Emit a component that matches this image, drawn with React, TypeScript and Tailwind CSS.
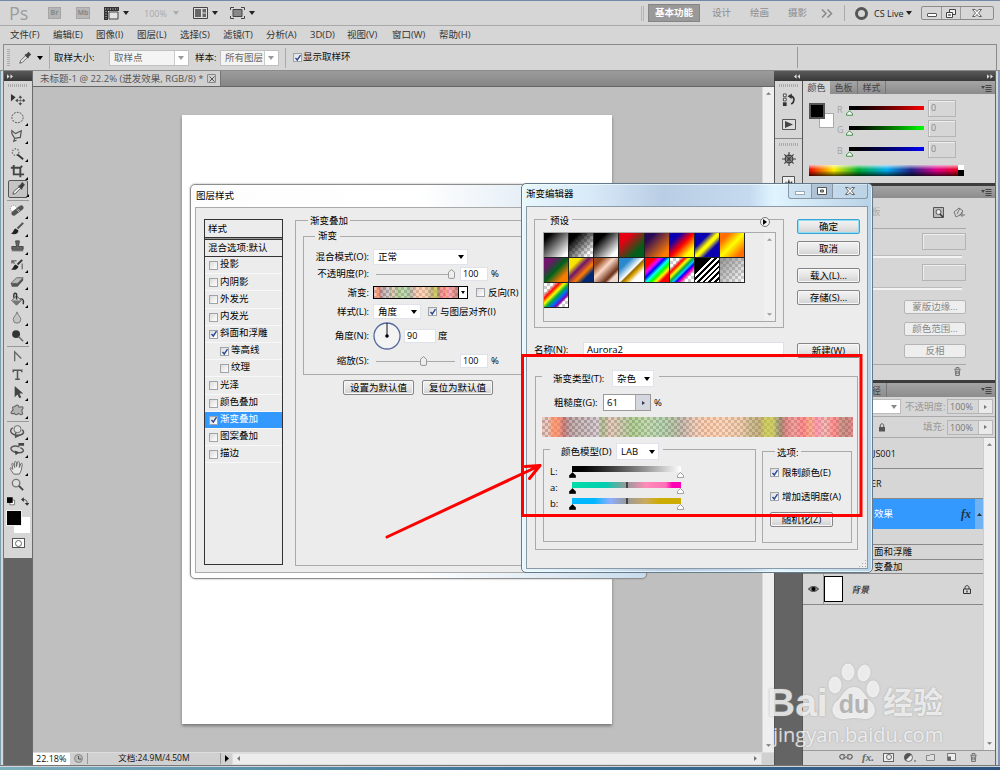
import type { ReactNode } from "react"

function Caret({ className = "", color = "text-[#222]" }: { className?: string; color?: string }) {
  return (
    <svg viewBox="0 0 6 4" className={`w-[6px] h-[4px] shrink-0 ${color} ${className}`}>
      <path d="M0 0h6L3 4z" fill="currentColor" />
    </svg>
  )
}

function Check({ on, className = "" }: { on?: boolean; className?: string }) {
  return (
    <span
      className={`w-[9px] h-[9px] shrink-0 border border-[#a0a3a8] bg-gradient-to-br from-[#dcdcdc] to-white flex items-center justify-center ${className}`}
    >
      {on && (
        <svg viewBox="0 0 8 8" className="w-[8px] h-[8px] shrink-0">
          <path d="M1.5 4l1.8 2L6.5 1.2" fill="none" stroke="#2b4a94" strokeWidth="1.4" />
        </svg>
      )}
    </span>
  )
}

function Button({ children, className = "", primary }: { children: ReactNode; className?: string; primary?: boolean }) {
  return (
    <div
      className={`h-[15px] shrink-0 rounded-[2px] border flex items-center justify-center bg-gradient-to-b from-[#f3f3f3] via-[#e6e6e6] to-[#d0d0d0] ${
        primary ? "border-[#3ba6d6] shadow-[inset_0_0_0_1px_#8fdcf5]" : "border-[#858585] shadow-[inset_0_0_0_1px_#f8f8f8]"
      } ${className}`}
    >
      {children}
    </div>
  )
}

function Select({ children, className = "" }: { children: ReactNode; className?: string }) {
  return (
    <div className={`bg-white border border-[#e0e3ea] flex items-center justify-between pl-1 pr-[3px] shrink-0 ${className}`}>
      <span>{children}</span>
      <Caret color="text-black" />
    </div>
  )
}

function PanelMenu() {
  return (
    <svg viewBox="0 0 11 8" className="w-[11px] h-[8px] text-[#444]">
      <path d="M0 2h4L2 5zM4.500 1h6v1h-6zM4.500 3h6v1h-6zM4.500 5h6v1h-6zM4.500 7h6v1h-6z" fill="currentColor" />
    </svg>
  )
}

function Grip() {
  return (
    <div className="h-[3px] mx-1 bg-[repeating-linear-gradient(90deg,#aaa_0_1px,#d6d6d6_1px_2px)]" />
  )
}

const menus = [
  { label: "文件(F)", w: "w-[43px]" },
  { label: "编辑(E)", w: "w-[43px]" },
  { label: "图像(I)", w: "w-[41px]" },
  { label: "图层(L)", w: "w-[43px]" },
  { label: "选择(S)", w: "w-[43px]" },
  { label: "滤镜(T)", w: "w-[43px]" },
  { label: "分析(A)", w: "w-[44px]" },
  { label: "3D(D)", w: "w-[37px]" },
  { label: "视图(V)", w: "w-[45px]" },
  { label: "窗口(W)", w: "w-[47px]" },
  { label: "帮助(H)", w: "w-[43px]" },
]

function TitleBar() {
  return (
    <div className="h-[25px] shrink-0 flex items-center pl-[9px] pr-[6px] border-b border-[#a9a9a9] text-[#8c8c8c]">
      <span className="w-[39px] text-[18px] leading-none text-[#9c9c9c]">Ps</span>
      <span className="w-[13px] h-[12px] bg-[#b4b4b4] border border-[#a6a6a6] text-[7px] leading-[10px] text-center font-bold text-[#888]">Br</span>
      <span className="w-[14px] h-[12px] ml-[15px] bg-[#b8b8b8] border border-[#a6a6a6] text-[7px] leading-[10px] text-center font-bold text-[#888]">Mb</span>
      <svg viewBox="0 0 15 13" className="w-[15px] h-[13px] ml-[14px]">
        <path d="M0 0h15v4H4v9H0z" fill="#333" />
        <path d="M5 5h9v7H5z" fill="#e4e4e4" stroke="#444" />
        <path d="M1 2h13M2 4v8" stroke="#ddd" strokeDasharray="1 1.500" />
      </svg>
      <Caret className="ml-[4px]" />
      <span className="ml-[15px] w-[29px] text-[9px] text-[#aaa]">100%</span>
      <Caret color="text-[#aaa]" />
      <svg viewBox="0 0 15 12" className="w-[15px] h-[12px] ml-[14px]">
        <path d="M.5.500h14v11H.500z" fill="#ddd" stroke="#444" />
        <path d="M2 2h6v8H2zM9.500 2H13v3.500H9.500zM9.500 6.500H13V10H9.500z" fill="#666" />
      </svg>
      <Caret className="ml-[4px]" />
      <svg viewBox="0 0 15 12" className="w-[15px] h-[12px] ml-[12px]">
        <path d="M3 2.500h9v7H3z" fill="#888" stroke="#444" />
        <path d="M.5 3V.500H4M11 .500h3.500V3M14.500 9v2.500H11M4 11.500H.500V9" fill="none" stroke="#444" />
      </svg>
      <Caret className="ml-[4px]" />
      <div className="flex-1" />
      <div className="w-[3px] h-[15px] border-x border-[#b4b4b4]" />
      <span className="ml-[4px] w-[52px] h-[18px] bg-[#999] border border-[#858585] text-white font-bold text-[9.5px] flex items-center justify-center">基本功能</span>
      <span className="ml-[12px] w-[38px]">设计</span>
      <span className="w-[38px]">绘画</span>
      <span className="w-[33px]">摄影</span>
      <svg viewBox="0 0 12 9" className="w-[12px] h-[9px]">
        <path d="M1 .500l4 4-4 4M6.500.500l4 4-4 4" fill="none" stroke="#888" strokeWidth="1.500" />
      </svg>
      <div className="ml-[11px] w-px h-[16px] bg-[#aaa]" />
      <span className="ml-[10px] w-[13px] h-[13px] rounded-full border-[3px] border-[#555]" />
      <span className="ml-[6px] w-[32px] text-[9px] text-[#222] whitespace-nowrap">CS Live</span>
      <Caret />
      <div className="ml-[9px] w-[73px] h-[14px] rounded-[2px] border border-[#8b8b8b] flex">
        <div className="w-[20px] border-r border-[#999] flex items-center justify-center">
          <span className="w-[10px] h-[4px] border border-[#555] bg-white rounded-[1px] mt-[3px]" />
        </div>
        <div className="w-[19px] border-r border-[#999] flex items-center justify-center">
          <svg viewBox="0 0 10 9" className="w-[10px] h-[9px]">
            <path d="M3.500.500h6v5h-6z" fill="#eee" stroke="#444" />
            <path d="M.5 3.500h6v5h-6z" fill="#fff" stroke="#444" />
            <path d="M2.500 5.500h2v1h-2z" fill="none" stroke="#444" strokeWidth=".7" />
          </svg>
        </div>
        <div className="flex-1 flex items-center justify-center">
          <CloseGlyph />
        </div>
      </div>
    </div>
  )
}

function CloseGlyph() {
  return (
    <svg viewBox="0 0 10 8" className="w-[10px] h-[8px]">
      <path d="M.5.500h2.700L5 2.500 6.800.500h2.700L6.500 4l3 3.500H6.800L5 5.500l-1.800 2H.500l3-3.500z" fill="#fff" stroke="#555" strokeWidth=".9" />
    </svg>
  )
}

function OptionsBar() {
  return (
    <div className="h-[26px] shrink-0 ml-[3px] mr-[3px] border-x border-t border-[#8b8b8b] flex items-center text-[#111]">
      <div className="ml-[3px] w-[3px] h-[18px] bg-[repeating-linear-gradient(#aaa_0_1px,#d6d6d6_1px_2px)]" />
      <svg viewBox="0 0 16 16" className="ml-[8px] w-[14px] h-[14px]">
        <path d="M2 14l1-3 6-6 2 2-6 6z" fill="#eee" stroke="#555" />
        <path d="M8 4l4 4M9 5l3-3 2 2-3 3z" stroke="#444" strokeWidth="1.500" fill="#444" />
      </svg>
      <Caret className="ml-[5px]" color="text-black" />
      <div className="ml-[6px] h-[23px] w-px bg-[#aaa]" />
      <span className="ml-[4px] w-[55px]">取样大小:</span>
      <div className="w-[80px] h-[16px] bg-white border border-[#c0c0c0] flex items-center justify-between text-[#666]">
        <span className="h-full flex items-center w-[65px] bg-[#f4f4f4] pl-1 border-r border-[#ccc]">取样点</span>
        <Caret className="mr-[4px]" color="text-[#999]" />
      </div>
      <span className="ml-[6px] w-[25px]">样本:</span>
      <div className="w-[59px] h-[16px] bg-white border border-[#c0c0c0] flex items-center justify-between text-[#666]">
        <span className="h-full flex items-center w-[44px] bg-[#f4f4f4] pl-1 border-r border-[#ccc] whitespace-nowrap">所有图层</span>
        <Caret className="mr-[4px]" color="text-[#999]" />
      </div>
      <div className="ml-[6px] h-[20px] w-px bg-[#aaa]" />
      <Check on className="ml-[7px]" />
      <span className="ml-[1px] w-[494px] pb-[2px]">显示取样环</span>
      <div className="h-[21px] w-px bg-[#999]" />
    </div>
  )
}

const toolGroups: { h: string; tools: ReactNode[] }[] = [
  {
    h: "h-[18px]",
    tools: [
      <g key="move"><path d="M2 2v8l5-4.500z" fill="#333" /><path d="M12 5v8M8 9h8M12 4l-1.500 2h3zM12 14l-1.500-2h3zM7 9l2-1.500v3zM17 9l-2-1.500v3z" fill="#444" stroke="#444" strokeWidth=".6" /></g>,
      <ellipse key="marquee" cx="9" cy="8" rx="6" ry="5.500" fill="none" stroke="#444" strokeDasharray="2 1.200" />,
      <path key="lasso" d="M3 3l4 3 6-3-1 7-6 1-3-5zM6 11l-1 3 3-1" fill="none" stroke="#555" strokeWidth="1.300" />,
      <g key="wand"><circle cx="7" cy="6.500" r="3.500" fill="none" stroke="#777" strokeWidth="1.500" strokeDasharray="1.500 1.500" /><path d="M9 9l6 5" stroke="#333" strokeWidth="2" /></g>,
      <path key="crop" d="M5 1v10h11M2 4h10v10M12 4l2-2" fill="none" stroke="#444" strokeWidth="2" />,
      <g key="eyedropper"><path d="M3 14l1-3 6-5 1.500 1.500-6 6z" fill="#eee" stroke="#555" /><path d="M9 5l4 4M10 6l3-4 2 2-3 4z" stroke="#444" strokeWidth="1.200" fill="#333" /></g>,
    ],
  },
  {
    h: "h-[17.9px]",
    tools: [
      <g key="heal"><circle cx="5" cy="6" r="3.500" fill="#fff" stroke="#888" strokeDasharray="1.500 1" /><path d="M5 11l8-6" stroke="#555" strokeWidth="5" strokeLinecap="round" /><path d="M8 7l3 3M9 6l3 3" stroke="#ccc" strokeWidth=".8" /></g>,
      <g key="brush"><path d="M15 2L9 8" stroke="#555" strokeWidth="2.200" /><path d="M2 13c3 0 2-4 5-5l3 2c0 4-5 5-8 3z" fill="#222" /></g>,
      <path key="stamp" d="M7 2h4l-1 6h5v3H3V8h5zM3 12.500h12" fill="#666" stroke="#444" />,
      <g key="history"><path d="M14 3L9 8" stroke="#333" strokeWidth="2" /><path d="M2 13c3 0 2-4 5-5l3 2c-1 4-5 4-8 3z" fill="#222" /><path d="M3 7V4h5M3 4l3 3M14 7v6" fill="none" stroke="#666" strokeWidth="1.300" /></g>,
      <g key="eraser"><path d="M2 10l6-6h7l-6 6z" fill="#bbb" stroke="#666" /><path d="M2 10h7v3.500H3zM9 10l6-6v3l-6 6.500z" fill="#555" /></g>,
      <g key="bucket"><path d="M3 9l5-5 5 5-5 5z" fill="#ccc" stroke="#555" /><path d="M8 8V2c-3-2-3 1-3 4M12 7c3 0 4 2 3 6" fill="none" stroke="#333" strokeWidth="1.500" /><path d="M3 9h10l-5 5z" fill="#777" /></g>,
      <path key="blur" d="M8.500 2c1 4 4 5 4 8a4 4 0 0 1-8 0c0-3 3-4 4-8z" fill="#c4c4c4" stroke="#777" />,
      <g key="dodge"><circle cx="7.500" cy="6.500" r="4.200" fill="#333" /><path d="M10 9l5 5" stroke="#666" strokeWidth="1.500" /></g>,
    ],
  },
  {
    h: "h-[18px]",
    tools: [
      <path key="pen" d="M6 13V3l7 7" fill="none" stroke="#666" strokeWidth="1.400" />,
      <path key="type" d="M4.500 5.500V3.500h9v2M9 3v10M6.500 13h5" fill="none" stroke="#555" strokeWidth="1.600" />,
      <path key="select" d="M6 1v12l3-3 2 4 2-1-2-4h4z" fill="#444" />,
      <path key="shape" d="M8 2.500q2-1 2.500 2l3.500-.500q2 1-.5 3.500l1 4q-1 2-4.500-.500-3 3-4 0-5 1-3.500-1.500l2-2.500q-2-3 1-3z" fill="#b4b4b4" stroke="#666" strokeWidth="1.200" strokeLinejoin="round" />,
    ],
  },
  {
    h: "h-[17.8px]",
    tools: [
      <g key="rotate3d"><circle cx="9" cy="5.500" r="3.800" fill="#ddd" stroke="#666" /><path d="M4 4c-5 3-1 8 5 8s8-3 5-6M7 9v5l4-2" fill="none" stroke="#555" strokeWidth="1.500" /></g>,
      <g key="camera3d"><path d="M11 5C4 3 0 6 3 9c3 3 10 3 12 1 1-2-1-3-3-4" fill="none" stroke="#555" strokeWidth="1.500" /><path d="M10 1h6v3h-6zM6 9l5 2-4 3z" fill="#444" /></g>,
      <path key="hand" d="M5 15l-4-6c1-1.500 2 0 3 1L3 4c1-1 2 0 2 1l1 3V2c1-1 2 0 2 1v4l1-5c1-1 2 0 2 1v5l1.500-4c1-1 2 0 1.500 1L13 11l-2 4z" fill="#e6e6e6" stroke="#666" />,
      <g key="zoom"><circle cx="7.500" cy="6.500" r="4" fill="#ddd" stroke="#777" strokeWidth="1.400" /><path d="M10.500 9.500l4.500 4.500" stroke="#444" strokeWidth="2" /></g>,
    ],
  },
]

function Toolbox() {
  return (
    <div className="w-[29px] shrink-0 border-r border-[#6a6a6a] bg-[#646464] flex flex-col">
      <div className="h-[10px] shrink-0 bg-gradient-to-b from-[#5a5a5a] to-[#383838] flex items-center pl-[3px]">
        <Arrows />
      </div>
      <div className="bg-[#d6d6d6] flex flex-col h-[477px] pt-[3px]">
        <Grip />
        <div className="h-[3px]" />
        {toolGroups.map((group, gi) => (
          <div key={gi}>
            {gi > 0 && <div className="h-[3px] mx-[3px] border-b border-[#999]" />}
            {group.tools.map((tool, ti) => (
              <div
                key={ti}
                className={`mx-[4px] flex items-end pl-[1px] ${group.h} ${gi === 0 && ti === 5 ? "border border-[#555] bg-[#c4c4c4] rounded-[2px] pl-0" : ""}`}
              >
                <svg viewBox="0 0 18 17" className="w-[17px] h-[16px] shrink-0">
                  {tool}
                </svg>
                {!(gi === 3 && ti === 3) && !(gi === 0 && ti === 0) && (
                  <svg viewBox="0 0 3 3" className="w-[3px] h-[3px] -ml-[1px] shrink-0">
                    <path d="M3 0v3H0z" fill="#000" />
                  </svg>
                )}
              </div>
            ))}
          </div>
        ))}
        <div className="h-[17px] shrink-0 flex items-center px-[3px] gap-[5px]">
          <svg viewBox="0 0 9 9" className="w-[9px] h-[9px]">
            <path d="M3 3h5v5H3z" fill="#fff" stroke="#777" />
            <path d="M0 0h6v6H0z" fill="#000" />
          </svg>
          <svg viewBox="0 0 9 9" className="w-[9px] h-[9px]">
            <path d="M2.500 2.500c3 0 4 1 4 4" fill="none" stroke="#444" />
            <path d="M0 2.500L3 0v5zM6.500 9L4 6h5z" fill="#333" />
          </svg>
        </div>
        <div className="h-[24px] pl-[2px] shrink-0">
          <div className="w-[16px] h-[16px] bg-black border border-[#eee] relative z-10" />
          <div className="w-[16px] h-[16px] bg-white ml-[8px] -mt-[9px]" />
        </div>
        <div className="flex-1 flex items-start justify-center pt-[4px]">
          <span className="w-[13px] h-[10px] border border-[#555] bg-white flex items-center justify-center">
            <span className="w-[7px] h-[7px] rounded-full border border-[#666]" />
          </span>
        </div>
      </div>
    </div>
  )
}

function Arrows({ left }: { left?: boolean }) {
  return (
    <svg viewBox="0 0 7 5" className={`w-[6px] h-[5px] ${left ? "rotate-180" : ""}`}>
      <path d="M0 0l3 2.500L0 5zM4 0l3 2.500L4 5z" fill="#ddd" />
    </svg>
  )
}

function DocumentArea() {
  return (
    <div className="w-[741px] shrink-0 flex flex-col bg-[#bfbfbf]">
      <div className="h-[16px] shrink-0 bg-gradient-to-b from-[#9c9c9c] to-[#858585] border-b border-[#666] flex">
        <div className="w-[188px] h-[15px] bg-[#d0d0d0] border-r border-[#777] flex items-center pl-[7px] text-[#555] whitespace-nowrap">
          <span className="flex-1">未标题-1 @ 22.2% (迸发效果, RGB/8) *</span>
          <span className="mr-[4px] w-[9px] h-[9px] border border-[#888] rounded-[1px] flex items-center justify-center">
            <svg viewBox="0 0 6 6" className="w-[6px] h-[6px]">
              <path d="M.5.500l5 5M5.500.500l-5 5" stroke="#555" />
            </svg>
          </span>
        </div>
      </div>
      <div className="flex-1 flex justify-between">
        <div className="pl-[149px] pt-[28px]">
          <div className="w-[430px] h-[609px] bg-white shadow-[0_2px_3px_#777]" />
        </div>
        <div className="w-[12px] bg-[#efefef] border-l border-[#d8d8d8] flex flex-col items-center justify-between py-[5px]">
          <svg viewBox="0 0 6 3" className="w-[5px] h-[3px]"><path d="M0 3l3-3 3 3z" fill="#777" /></svg>
          <svg viewBox="0 0 6 3" className="w-[5px] h-[3px]"><path d="M0 0l3 3 3-3z" fill="#777" /></svg>
        </div>
      </div>
      <div className="h-[13px] shrink-0 bg-[#d0d0d0] border-t border-[#ddd] flex items-center text-[8.5px] text-[#111] pb-px">
        <span className="w-[37px] h-[12px] bg-white flex items-center pl-[3px] text-[9px]">22.18%</span>
        <span className="w-[18px] h-full items-center flex justify-center border-r border-[#999]">
          <svg viewBox="0 0 9 9" className="w-[9px] h-[9px]">
            <circle cx="4.500" cy="4.500" r="4" fill="#bbb" stroke="#888" />
            <path d="M4.500 2v3h3" fill="none" stroke="#555" />
          </svg>
        </span>
        <span className="w-[133px] h-full flex items-center justify-center border-r border-[#999]">文档:24.9M/4.50M</span>
        <span className="w-[11px] flex justify-center">
          <svg viewBox="0 0 4 7" className="w-[4px] h-[7px]"><path d="M0 0l4 3.500L0 7z" /></svg>
        </span>
        <div className="flex-1 h-[12px] bg-[#ededed] border border-[#ddd] flex items-center justify-between px-[4px]">
          <svg viewBox="0 0 3 5" className="w-[3px] h-[5px]"><path d="M3 0v5L0 2.500z" fill="#777" /></svg>
          <svg viewBox="0 0 3 5" className="w-[3px] h-[5px]"><path d="M0 0v5l3-2.500z" fill="#777" /></svg>
        </div>
        <div className="w-[12px]" />
      </div>
    </div>
  )
}

function IconStrip() {
  return (
    <div className="w-[29px] shrink-0 border-x border-[#555] bg-[#646464]">
      <div className="h-[155px] bg-[#d6d6d6] flex flex-col items-center pt-[3px]">
        <div className="w-full"><Grip /></div>
        <svg viewBox="0 0 14 15" className="w-[13px] h-[14px] mt-[6px]">
          <path d="M1.500 1h3v3h-3zM1.500 5.500h3v3h-3z" fill="#eee" stroke="#444" />
          <path d="M1 10h4v4H1z" fill="#333" />
          <path d="M9 3c5 1 5 6 1 9" fill="none" stroke="#333" strokeWidth="1.800" />
          <path d="M6 3.500L10.500.500v6z" fill="#333" />
        </svg>
        <svg viewBox="0 0 14 11" className="w-[14px] h-[11px] mt-[12px]">
          <path d="M.5.500h13v10H.500z" fill="#ddd" stroke="#555" />
          <path d="M3 2l8 3.500L3 9z" fill="#444" />
        </svg>
        <div className="w-full h-px bg-[#888] mt-[8px] mb-[4px]" />
        <div className="w-full"><Grip /></div>
        <svg viewBox="0 0 15 15" className="w-[14px] h-[14px] mt-[6px] shrink-0">
          <circle cx="7.500" cy="7.500" r="4" fill="none" stroke="#444" strokeWidth="1.500" />
          <path d="M7.500 0v15M0 7.500h15M2.500 2.500l10 10M12.500 2.500l-10 10" stroke="#444" strokeWidth="1.200" />
        </svg>
        <svg viewBox="0 0 13 11" className="w-[13px] h-[11px] mt-[10px] shrink-0">
          <path d="M.5.500h12v10H.500z" fill="#eee" stroke="#555" />
          <path d="M2 10l2-5 1 3 2-5 1 4 2-2 1 5z" fill="#333" />
        </svg>
      </div>
    </div>
  )
}

const channels = [
  { label: "R", bar: "bg-gradient-to-r from-black to-[#f00]" },
  { label: "G", bar: "bg-gradient-to-r from-black to-[#0f0]" },
  { label: "B", bar: "bg-gradient-to-r from-black to-[#00f]" },
]

function ColorPanel() {
  return (
    <div className="h-[102px] shrink-0">
      <div className="h-[13px] bg-gradient-to-b from-[#a5a5a5] to-[#8c8c8c] flex items-center text-[9px] text-[#444]">
        <span className="w-[27px] h-full bg-[#d6d6d6] flex items-center justify-center">颜色</span>
        <span className="w-[28px] h-full border-r border-[#777] flex items-center justify-center">色板</span>
        <span className="w-[28px] h-full border-r border-[#777] flex items-center justify-center">样式</span>
        <span className="flex-1 flex justify-end pr-[3px]"><PanelMenu /></span>
      </div>
      <div className="flex pt-[6px] pl-[6px]">
        <div className="w-[27px] pt-[3px] shrink-0">
          <div className="w-[16px] h-[16px] bg-black border-2 border-[#555] relative z-10" />
          <div className="w-[15px] h-[15px] bg-white border border-[#aaa] ml-[10px] -mt-[6px]" />
        </div>
        <div>
          {channels.map((c) => (
            <div key={c.label} className="h-[20.3px] flex items-start">
              <span className="w-[13px] pl-[1px] pt-[5px] text-[9px] leading-none text-[#a2a2a2]">{c.label}</span>
              <div className="w-[75px] pt-[6px]">
                <div className={`h-[4px] ${c.bar}`} />
                <svg viewBox="0 0 8 6" className="w-[7px] h-[6px] -ml-[3px]">
                  <path d="M4 .500L7.500 4v1.500h-7V4z" fill="#fff" stroke="#287a28" />
                </svg>
              </div>
              <span className="ml-[4px] w-[28px] h-[17px] border border-[#b5b5b5] pl-[2px] text-[9px] leading-[14px] text-[#888] shadow-[inset_1px_1px_0_#eee]">0</span>
            </div>
          ))}
        </div>
      </div>
      <div className="ml-[6px] mt-[4px] w-[155px] h-[11px] flex bg-[linear-gradient(#ffffffb0,#fff0_40%,#0000_50%,#000b),linear-gradient(90deg,#e00,#fe0_16%,#0a3_32%,#0ae_50%,#228_66%,#d08_82%,#e00)]">
        <div className="ml-auto w-[6px] bg-black border-t-[5px] border-white" />
      </div>
    </div>
  )
}

function PanelDivider() {
  return <div className="h-[3px] shrink-0 bg-[#3c3c3c]" />
}

function MasksPanel() {
  return (
    <div className="h-[194px] shrink-0 flex flex-col">
      <div className="h-[12px] shrink-0 bg-gradient-to-b from-[#a5a5a5] to-[#8c8c8c] flex items-center justify-end pr-[3px]">
        <PanelMenu />
      </div>
      <div className="h-[31px] shrink-0 flex items-center pl-[68px] pb-[2px] border-b border-[#aaa] mr-[29px] text-[#aaa]">
        <span className="w-[62px]">板</span>
        <svg viewBox="0 0 11 11" className="w-[11px] h-[11px] shrink-0">
          <path d="M.5.500h10v10H.500z" fill="#bbb" stroke="#555" />
          <circle cx="5.500" cy="5" r="2.500" fill="#eee" stroke="#555" /><path d="M7 7l3 3" stroke="#333" strokeWidth="1.500" />
        </svg>
        <svg viewBox="0 0 12 11" className="w-[12px] h-[11px] ml-[9px] shrink-0">
          <path d="M1 5l5-4 4 3-3 4-4 2zM7 1l-3 6M9 5v5M6.500 8H12" fill="none" stroke="#777" />
        </svg>
      </div>
      <div className="flex flex-col items-end pr-[29px] pt-[4px]">
        <span className="w-[44px] h-[17px] border border-[#b4b4b4] shadow-[inset_1px_1px_0_#eee]" />
        <div className="w-[100px] h-[3px] mt-[5px] mr-[4px] bg-[#f3f3f3] border-t border-[#bbb]" />
        <span className="w-[44px] h-[17px] mt-[6px] border border-[#b4b4b4] shadow-[inset_1px_1px_0_#eee]" />
        <div className="w-[100px] h-[3px] mt-[6px] mr-[4px] bg-[#f3f3f3] border-t border-[#bbb]" />
        <div className="mt-[10px] flex flex-col gap-[8px] text-[#888]">
          {["蒙版边缘...", "颜色范围...", "反相"].map((t) => (
            <span key={t} className="w-[62px] h-[14px] border border-[#b5b5b5] rounded-[2px] bg-[#eee] flex items-center justify-center">{t}</span>
          ))}
        </div>
      </div>
      <div className="mt-[6px] mr-[29px] border-t border-[#aaa] flex justify-end pr-[4px] pt-[2px]">
        <TrashIcon />
      </div>
    </div>
  )
}

function TrashIcon() {
  return (
    <svg viewBox="0 0 9 10" className="w-[9px] h-[9px] shrink-0">
      <path d="M1 2.500h7M3 2V.500h3V2M2 3l.5 6.500h4L7 3M3.700 4v4M5.300 4v4" fill="none" stroke="#666" />
    </svg>
  )
}

function LayersPanel() {
  return (
    <div className="flex-1 flex flex-col">
      <div className="h-[14px] shrink-0 bg-gradient-to-b from-[#a5a5a5] to-[#8c8c8c] flex items-center justify-between text-[9px] text-[#444]">
        <span className="w-[84px] h-full pr-[5px] border-r border-[#777] flex items-center justify-end">路径</span>
        <span className="pr-[3px]"><PanelMenu /></span>
      </div>
      <div className="h-[20px] shrink-0 border-b border-[#aaa] flex items-center text-[#999]">
        <div className="w-[98px] h-[15px] bg-white border border-[#bbb] flex items-center justify-end pr-[3px] shrink-0">
          <Caret color="text-[#888]" />
        </div>
        <span className="w-[46px] pl-[4px] whitespace-nowrap">不透明度:</span>
        <Percent />
      </div>
      <div className="h-[21px] shrink-0 border-b border-[#aaa] flex items-center text-[#999]">
        <svg viewBox="0 0 8 9" className="w-[8px] h-[9px] ml-[75px] shrink-0">
          <path d="M1 4h6v4.500H1z" fill="#555" /><path d="M2.300 4V2.300c0-2 3.400-2 3.400 0V4" fill="none" stroke="#555" />
        </svg>
        <span className="ml-[37px] w-[24px] whitespace-nowrap">填充:</span>
        <Percent />
      </div>
      <div className="flex-1 flex">
        <div className="w-[180px] text-[#111]">
          <div className="h-[31px] border-b border-[#888] flex items-center pl-[70px] text-[9px]">JS001</div>
          <div className="h-[30px] border-b border-[#888] flex items-center pl-[68px] text-[9px]">ER</div>
          <div className="h-[30px] bg-[#3399ff] flex items-center pl-[71px] text-white">
            <span className="flex-1">效果</span>
            <span className="font-['Liberation_Serif'] italic font-bold text-[12px] leading-none text-[#234]">fx</span>
            <span className="ml-[4px] w-[8px] h-full bg-[#70b3f5] flex items-center justify-center">
              <svg viewBox="0 0 5 3" className="w-[5px] h-[3px]"><path d="M0 3l2.500-3L5 3z" fill="#333" /></svg>
            </span>
          </div>
          <div className="h-[16px] border-b border-[#888]" />
          <div className="h-[15px] border-b border-[#888] flex items-center pl-[71px]">面和浮雕</div>
          <div className="h-[14px] border-b border-[#888] flex items-center pl-[71px]">变叠加</div>
          <div className="h-[31px] border-b border-[#888] flex items-center">
            <div className="w-[21px] h-full border-r border-[#999] flex items-center justify-center">
              <svg viewBox="0 0 12 8" className="w-[11px] h-[8px]">
                <path d="M.5 4C3 .500 9 .500 11.500 4 9 7.500 3 7.500.500 4z" fill="#888" stroke="#333" /><circle cx="6" cy="4" r="2.200" />
              </svg>
            </div>
            <div className="w-[19px] h-[26px] bg-white border border-black" />
            <span className="ml-[8px] flex-1 italic text-[9px]">背景</span>
            <svg viewBox="0 0 8 9" className="w-[8px] h-[9px] mr-[12px]">
              <path d="M.5 4h7v4.500h-7zM2 4V2.500c0-2.500 4-2.500 4 0V4" fill="none" stroke="#333" /><path d="M3.500 5.500h1v2h-1z" />
            </svg>
          </div>
        </div>
        <div className="flex-1 bg-[#efefef] border-l border-[#ccc] flex flex-col items-center justify-between py-[5px]">
          <svg viewBox="0 0 6 3" className="w-[5px] h-[3px]"><path d="M0 3l3-3 3 3z" fill="#777" /></svg>
          <svg viewBox="0 0 6 3" className="w-[5px] h-[3px]"><path d="M0 0l3 3 3-3z" fill="#777" /></svg>
        </div>
      </div>
      <div className="h-[15px] shrink-0 border-t border-[#999] flex items-center pb-[2px] pl-[36px] text-[#666]">
        <svg viewBox="0 0 14 6" className="w-[14px] h-[6px]">
          <path d="M6 1.500C3-.500 0 1 1 3.500s4 2 5 0M8 1.500c3-2 6-.500 5 2s-4 2-5 0M4 3h6" fill="none" stroke="#666" strokeWidth="1.200" />
        </svg>
        <span className="ml-[9px] w-[21px] font-['Liberation_Serif'] italic font-bold text-[11px] leading-none">fx.</span>
        <span className="w-[11px] h-[9px] bg-[#eee] border border-[#666] flex items-center justify-center"><span className="w-[6px] h-[6px] rounded-full border border-[#666]" /></span>
        <svg viewBox="0 0 12 9" className="w-[12px] h-[9px] ml-[10px]">
          <circle cx="4.500" cy="4.500" r="4" fill="#eee" stroke="#666" /><path d="M1.500 7.500A4 4 0 0 1 7.500 1.500z" fill="#555" /><path d="M10 8h2" stroke="#555" />
        </svg>
        <svg viewBox="0 0 9 7" className="w-[9px] h-[7px] ml-[10px]"><path d="M.5 1.500h3l1-1h4v6h-8z" fill="#ddd" stroke="#888" /></svg>
        <svg viewBox="0 0 9 8" className="w-[9px] h-[8px] ml-[12px]"><path d="M.5.500h8v7h-8z" fill="#eee" stroke="#777" /><path d="M4 7V3.500H1V7z" fill="#666" /></svg>
        <span className="ml-[13px]"><TrashIcon /></span>
      </div>
    </div>
  )
}

function Percent() {
  return (
    <div className="w-[46px] h-[15px] border border-[#b5b5b5] flex shrink-0">
      <span className="w-[31px] border-r border-[#bbb] text-[9px] leading-[13px] text-[#777] pl-[2px]">100%</span>
      <span className="flex-1 bg-[#eaeaea] flex items-center justify-center">
        <svg viewBox="0 0 3 4" className="w-[3px] h-[4px]"><path d="M0 0v4l3-2z" fill="#777" /></svg>
      </span>
    </div>
  )
}

const styleItems = [
  { label: "投影" },
  { label: "内阴影" },
  { label: "外发光" },
  { label: "内发光" },
  { label: "斜面和浮雕", on: true },
  { label: "等高线", on: true, sub: true },
  { label: "纹理", sub: true },
  { label: "光泽" },
  { label: "颜色叠加" },
  { label: "渐变叠加", on: true, active: true },
  { label: "图案叠加" },
  { label: "描边" },
]

function Noise({ className }: { className: string }) {
  return (
    <div className={`bg-[repeating-conic-gradient(#9a9a9a_0_25%,#fff_0_50%)] bg-[length:6px_6px] ${className}`}>
      <div className="w-full h-full bg-[linear-gradient(90deg,#dfa49699_0%,#e0aa9c99_2%,#ff8c60d8_3.500%,#f68a66d8_5.500%,#c06060c8_7%,#a57c7ca0_9%,#ab90909a_12%,#b8a0a899_16%,#c4b4ba99_18%,#98a870b0_19.500%,#dcb09ca0_22%,#b3b588a8_26%,#93bc6cb0_29%,#aac98ca8_34%,#98c490a8_38%,#9cae84a8_42%,#b09e8ea8_45%,#eab89ca8_49%,#ffbc92b0_53%,#ffc49eb0_58%,#ecba8eb0_64%,#c0a870b8_67%,#b89c5cc0_70%,#c8c84cd8_72%,#c8c450d8_74.500%,#98985cc0_75.500%,#a07458c8_77%,#e87474c8_79%,#ee8480b8_81%,#ff6c70c8_84%,#fc9a70c8_86%,#ff88a0d0_88.500%,#f3a098b0_91%,#ff7474c8_94%,#c07868c0_96.500%,#c07068c8_98%,#e07070c8_100%)]" />
    </div>
  )
}

function Slider({ pos }: { pos: string }) {
  return (
    <div className="w-[79px] ml-[3px] mr-[5px] h-[11px] flex items-center">
      <div className={`h-px bg-[#aaa] ${pos}`} />
      <svg viewBox="0 0 8 11" className="w-[7px] h-[10px] shrink-0">
        <path d="M4 .500l3.500 3V9q0 1.500-1.500 1.500H2Q.500 10.500.500 9V3.500z" fill="#eee" stroke="#888" />
      </svg>
      <div className="flex-1 h-px bg-[#aaa]" />
    </div>
  )
}

function LayerStyleDialog() {
  return (
    <div className="absolute left-[190px] top-[184px] w-[457px] h-[395px] rounded-[5px] border border-[#8d8d8d] bg-gradient-to-r from-[#fdfdfd] via-white to-[#c9dcec] shadow-[0_0_2px_#999] flex flex-col px-[4px]">
      <div className="h-[22px] shrink-0 flex items-center pl-[1px] text-black">图层样式</div>
      <div className="h-[366px] border border-[#aaa] bg-[#ececec] flex pl-[8px] pt-[11px] text-black">
        <div className="w-[79px] h-[346px] border border-[#333] shrink-0">
          <div className="h-[17px] flex items-center pl-[3px]">样式</div>
          <div className="h-[3px] border-y border-[#333] bg-[#999]" />
          <div className="h-[17px] flex items-center pl-[3px] border-b border-[#333] whitespace-nowrap">混合选项:默认</div>
          {styleItems.map((item) => (
            <div
              key={item.label}
              className={`h-[17.2px] flex items-center gap-[2px] pb-[2px] border-b border-[#f8f8f8] whitespace-nowrap ${item.sub ? "pl-[15px]" : "pl-[4px]"} ${item.active ? "bg-[#3399ff] text-white" : ""}`}
            >
              <Check on={item.on} className="mt-[3px]" />
              {item.label}
            </div>
          ))}
        </div>
        <div className="w-[335px] h-[346px] ml-[12px] mt-[1px] border border-[#aaa] shrink-0 pl-[7px]">
          <div className="-mt-[7px] ml-[5px] w-fit h-[13px] leading-[13px] px-[2px] bg-[#ececec]">渐变叠加</div>
          <div className="w-[300px] h-[139px] mt-[9px] border border-[#aaa]">
            <div className="-mt-[7px] ml-[11px] w-fit h-[12px] leading-[12px] px-[3px] bg-[#ececec]">渐变</div>
            <Row className="mt-[7px] h-[16px]" label="混合模式(O):">
              <Select className="w-[95px] h-[16px]">正常</Select>
            </Row>
            <Row className="mt-[2px] h-[14px]" label="不透明度(P):">
              <Slider pos="w-[73px]" />
              <Field className="w-[28px]">100</Field>
              <span className="ml-[3px]">%</span>
            </Row>
            <Row className="mt-[5px] h-[13px]" label="渐变:">
              <div className="w-[95px] h-[13px] border border-black flex">
                <Noise className="flex-1" />
                <span className="w-[9px] bg-white border-l border-black flex items-center justify-center">
                  <svg viewBox="0 0 4 3" className="w-[4px] h-[3px]"><path d="M0 0h4L2 3z" /></svg>
                </span>
              </div>
              <Check className="ml-[8px]" />
              <span className="ml-[3px]">反向(R)</span>
            </Row>
            <Row className="mt-[5px] h-[15px]" label="样式(L):">
              <Select className="w-[48px] h-[15px]">角度</Select>
              <Check on className="ml-[7px]" />
              <span className="ml-[3px]">与图层对齐(I)</span>
            </Row>
            <Row className="mt-[3px] h-[28px]" label="角度(N):">
              <svg viewBox="0 0 28 28" className="w-[28px] h-[28px] shrink-0">
                <circle cx="14" cy="14" r="13" fill="#f3f3f3" stroke="#556b9c" strokeWidth="1.300" />
                <path d="M14 1v13" stroke="#111" /><circle cx="14" cy="14" r="1.800" />
              </svg>
              <Field className="w-[32px] ml-[3px]">90</Field>
              <span className="ml-[2px]">度</span>
            </Row>
            <Row className="mt-[4px] h-[14px]" label="缩放(S):">
              <Slider pos="w-[44px]" />
              <Field className="w-[28px]">100</Field>
              <span className="ml-[3px]">%</span>
            </Row>
          </div>
          <div className="flex mt-[5px] ml-[40px] gap-[8px]">
            <Button className="w-[71px]">设置为默认值</Button>
            <Button className="w-[71px]">复位为默认值</Button>
          </div>
        </div>
      </div>
    </div>
  )
}

function Row({ label, className, children }: { label: string; className: string; children: ReactNode }) {
  return (
    <div className={`flex items-center whitespace-nowrap ${className}`}>
      <span className="w-[65px] mr-[4px] text-right shrink-0">{label}</span>
      {children}
    </div>
  )
}

function Field({ children, className }: { children: ReactNode; className: string }) {
  return (
    <span className={`h-[14px] bg-white border border-[#dfe2e8] pl-[2px] text-[9px] leading-[12px] shrink-0 ${className}`}>{children}</span>
  )
}

const presets = [
  "bg-[linear-gradient(135deg,#000_15%,#fff_90%)]",
  "bg-[linear-gradient(135deg,#000_20%,#0000_85%)]",
  "bg-[linear-gradient(135deg,#000_25%,#fff_85%)]",
  "bg-[linear-gradient(135deg,#e60012_25%,#00601b_75%)]",
  "bg-[linear-gradient(135deg,#290a59_20%,#ff7c00_85%)]",
  "bg-[linear-gradient(135deg,#0a00b2_22%,#f00_50%,#fffc00_80%)]",
  "bg-[linear-gradient(135deg,#0a00b2_30%,#fffc00_48%,#fffc00_54%,#0a00b2_70%)]",
  "bg-[linear-gradient(135deg,#ff6e02_20%,#ff0_50%,#ff6d00_85%)]",
  "bg-[linear-gradient(135deg,#6f156c_20%,#00601b_50%,#fd7c00_80%)]",
  "bg-[linear-gradient(135deg,#f9e600_24%,#6f156c_42%,#fd7c00_62%,#002874_78%)]",
  "bg-[linear-gradient(135deg,#97461a_18%,#fbd8c5_42%,#6c2e16_72%,#efdbcd_82%)]",
  "bg-[linear-gradient(135deg,#2989cc_25%,#fff_50%,#906a00_54%,#d99f00_62%,#fff_75%)]",
  "bg-[linear-gradient(135deg,#f00_20%,#f0f_32%,#00f_42%,#0ff_52%,#0f0_62%,#ff0_72%,#f00_82%)]",
  "bg-[linear-gradient(135deg,#0000_22%,#f00_30%,#ff0_40%,#0a4_49%,#0cf_56%,#00f_62%,#f0a_70%,#0000_78%)]",
  "bg-[linear-gradient(135deg,#000_30%,#0000_30%),repeating-linear-gradient(135deg,#fff_0_2px,#000_2px_4px)]",
  "bg-[linear-gradient(135deg,#777c,#8880)]",
  "bg-[linear-gradient(135deg,#0000_22%,#f00_32%,#ff0_43%,#0a4_54%,#06f_65%,#80a_74%,#0000_80%)]",
]

const labRows = [
  { label: "L:", bar: "bg-gradient-to-r from-black to-white" },
  { label: "a:", bar: "bg-[linear-gradient(90deg,#00dca8,#00ceb0_30%,#999_50%,#ff8cb8_68%,#ff70b8_86%,#ff00b4_92%)]" },
  { label: "b:", bar: "bg-[linear-gradient(90deg,#00b8ff_20%,#8caeff_35%,#999_50%,#ccaa5c_68%,#ccac00_80%)]" },
]

function Handle({ fill }: { fill: string }) {
  return (
    <svg viewBox="0 0 8 7" className="w-[7px] h-[6px]">
      <path d="M4 .500L7.500 4v2.500h-7V4z" fill={fill} stroke={fill === "#fff" ? "#777" : "#000"} strokeWidth=".8" />
    </svg>
  )
}

function GradientEditor() {
  return (
    <div className="absolute left-[521px] top-[183px] w-[352px] h-[390px] rounded-[5px] border border-[#65798a] bg-[linear-gradient(90deg,#e8f7fb,#d8e9f8_20%,#b9cde4_40%,#c5daef_65%,#e0f4ff_72%,#b8d2e6)] shadow-[inset_0_0_0_1px_#f4ffffb0] flex flex-col pl-[4px] text-black">
      <div className="h-[22px] shrink-0 flex justify-between">
        <span className="pt-[5px]">渐变编辑器</span>
        <div className="mr-[4px] w-[80px] h-[15px] rounded-b-[3px] border-x border-b border-[#8797a8] bg-[#bfd2e366] flex">
          <span className="w-[23px] flex items-center justify-center border-r border-[#8797a8]">
            <span className="w-[10px] h-[4px] bg-white border border-[#9ab] mt-[4px]" />
          </span>
          <span className="w-[21px] flex items-center justify-center border-r border-[#8797a8] bg-[#899bb566]">
            <svg viewBox="0 0 10 8" className="w-[10px] h-[8px]">
              <path d="M.5.500h9v7h-9z" fill="#fff" stroke="#555" />
              <path d="M3.500 3h3v2h-3z" fill="#9ab" stroke="#555" />
            </svg>
          </span>
          <span className="flex-1 flex items-center justify-center"><CloseGlyph /></span>
        </div>
      </div>
      <div className="w-[342px] h-[363px] border border-[#8b98a5] bg-[#ececec] flex flex-col">
        <div className="flex pl-[7px] pt-[12px]">
          <div>
            <div className="w-[250px] h-[109px] border border-[#aaa]">
              <div className="-mt-[6px] flex items-center justify-between pl-[12px] pr-[13px] h-[15px]">
                <span className="px-[3px] bg-[#ececec] -mt-[2px]">预设</span>
                <span className="w-[10px] h-[10px] rounded-full border border-[#777] bg-[#f4f4f4] flex items-center justify-center">
                  <svg viewBox="0 0 4 6" className="w-[4px] h-[6px]"><path d="M0 0l4 3-4 3z" /></svg>
                </span>
              </div>
              <div className="ml-[8px] mt-[3px] w-[233px] h-[90px] border border-[#aaa] flex justify-between">
                <div className="w-[201px] grid grid-cols-8 auto-rows-[25px] shrink-0">
                  {presets.map((bg) => (
                    <div key={bg} className="border-r border-b border-[#222] bg-[repeating-conic-gradient(#ccc_0_25%,#fff_0_50%)] bg-[length:6px_6px]">
                      <div className={`w-full h-full ${bg}`} />
                    </div>
                  ))}
                </div>
                <div className="w-[11px] bg-[#f0f0f0] flex flex-col items-center justify-between py-[5px]">
                  <svg viewBox="0 0 6 3" className="w-[5px] h-[3px]"><path d="M0 3l3-3 3 3z" fill="#999" /></svg>
                  <svg viewBox="0 0 6 3" className="w-[5px] h-[3px]"><path d="M0 0l3 3 3-3z" fill="#999" /></svg>
                </div>
              </div>
            </div>
            <div className="mt-[14px] h-[16px] flex items-center">
              <span className="w-[49px]">名称(N):</span>
              <span className="flex-1 h-full bg-white border border-[#dde0e8] pl-[3px] leading-[14px]">Aurora2</span>
            </div>
          </div>
          <div className="ml-[13px] w-[63px]">
            <Button primary>确定</Button>
            <Button className="mt-[7px]">取消</Button>
            <Button className="mt-[12px]">载入(L)...</Button>
            <Button className="mt-[7px]">存储(S)...</Button>
            <Button className="mt-[38px]">新建(W)</Button>
          </div>
        </div>
        <div className="mt-[18px] ml-[8px] w-[323px] h-[174px] border border-[#aaa] shrink-0">
          <div className="-mt-[7px] ml-[6px] w-[117px] h-[17px] bg-[#ececec] flex items-center pl-[11px] whitespace-nowrap">
            <span className="w-[59px]">渐变类型(T):</span>
            <Select className="w-[42px] h-[17px]">杂色</Select>
          </div>
          <div className="mt-[7px] ml-[18px] h-[17px] flex items-center whitespace-nowrap">
            <span className="w-[49px]">粗糙度(G):</span>
            <div className="w-[48px] h-[17px] border border-[#999] bg-white flex">
              <span className="flex-1 pl-[3px] leading-[15px]">61</span>
              <span className="w-[15px] border-l border-[#aaa] bg-[#d4d7de] flex items-center justify-center">
                <svg viewBox="0 0 3 4" className="w-[3px] h-[4px]"><path d="M0 0l3 2-3 2z" fill="#335" /></svg>
              </span>
            </div>
            <span className="ml-[3px]">%</span>
          </div>
          <Noise className="mt-[6px] ml-[6px] w-[311px] h-[20px]" />
          <div className="flex items-start mt-[12px] ml-[7px]">
            <div className="w-[213px] h-[93px] border border-[#aaa]">
              <div className="-mt-[7px] ml-[6px] w-[113px] h-[17px] bg-[#ececec] flex items-center pl-[11px] whitespace-nowrap">
                <span className="w-[55px]">颜色模型(D)</span>
                <Select className="w-[43px] h-[17px]">LAB</Select>
              </div>
              <div className="mt-[6px] ml-[6px]">
                {labRows.map((row, i) => (
                  <div key={row.label} className="h-[16px] flex">
                    <span className="w-[22px] leading-[12px]">{row.label}</span>
                    <div className="w-[109px]">
                      <div className={`h-[6px] flex justify-center ${row.bar}`}>
                        {i > 0 && <span className="w-[2px] h-full bg-[#444]" />}
                      </div>
                      <div className="flex justify-between -mx-[3px]">
                        <Handle fill="#000" />
                        <Handle fill="#fff" />
                      </div>
                    </div>
                  </div>
                ))}
              </div>
            </div>
            <div className="ml-[6px] mt-[2px] w-[90px] h-[92px] border border-[#aaa]">
              <div className="-mt-[7px] ml-[12px] w-fit px-[2px] h-[15px] leading-[15px] bg-[#ececec]">选项:</div>
              <div className="mt-[5px] ml-[7px] h-[15px] flex items-center gap-[3px] whitespace-nowrap"><Check on />限制颜色(E)</div>
              <div className="mt-[9px] ml-[7px] h-[15px] flex items-center gap-[3px] whitespace-nowrap"><Check on />增加透明度(A)</div>
              <Button className="ml-[7px] mt-[8px] w-[63px]">随机化(Z)</Button>
            </div>
          </div>
        </div>
        <svg viewBox="0 0 8 8" className="w-[8px] h-[8px] ml-auto mt-auto">
          <path d="M6 0h1v1H6zM6 3h1v1H6zM6 6h1v1H6zM3 3h1v1H3zM3 6h1v1H3zM0 6h1v1H0z" fill="#aaa" />
        </svg>
      </div>
    </div>
  )
}

function Annotation() {
  return (
    <svg viewBox="0 0 1000 770" className="absolute inset-0 w-[1000px] h-[770px]" fill="none" stroke="#ff0000">
      <rect x="522.500" y="355.500" width="338.500" height="160" strokeWidth="3" />
      <path d="M387 537L540 465.500M525 466.500l15-1L529.500 478.500" strokeWidth="3" strokeLinecap="round" strokeLinejoin="round" />
    </svg>
  )
}

function Watermark() {
  return (
    <div className="absolute left-[767px] top-[660px] w-[182px] h-[92px] text-white/75 whitespace-nowrap">
      <div className="h-[60px] flex items-end">
        <span className="w-[61px] font-['Liberation_Sans'] font-bold text-[39px] leading-[35px] [text-shadow:0_0_2px_#888a]">Bai</span>
        <div className="relative w-[52px] h-[60px] flex justify-center items-end">
          <svg viewBox="0 0 52 60" className="absolute inset-0 w-[52px] h-[60px] drop-shadow-[0_0_1px_#8888]">
            <g fill="#ffffffb8">
              <ellipse cx="7" cy="25" rx="6.500" ry="8.500" />
              <ellipse cx="20" cy="12" rx="6.500" ry="8.500" />
              <ellipse cx="36" cy="13" rx="6.500" ry="8.500" transform="rotate(12 36 13)" />
              <ellipse cx="45" cy="29" rx="6.500" ry="8.500" />
              <path d="M26 27c9 0 10 9 17 15 7 7 4 17-6 17-5 0-7-1-11-1s-6 1-11 1C5 59 1 49 8 42c7-6 9-15 18-15z" />
            </g>
          </svg>
          <span className="relative font-['Liberation_Sans'] font-bold text-[25px] leading-[31px] text-[#b4b4b4]">du</span>
        </div>
        <span className="ml-[3px] font-bold text-[30px] leading-[36px] [text-shadow:0_0_2px_#888a]">经验</span>
      </div>
      <div className="mt-[5px] text-[20px] leading-[20px] pl-[6px] [text-shadow:0_0_2px_#888a]">jingyan.baidu.com</div>
    </div>
  )
}

export default function App() {
  return (
    <div className="relative w-[1000px] h-[770px] overflow-hidden bg-[#d6d6d6] flex flex-col font-['Open_Sans','Noto_Sans_CJK_SC',sans-serif] text-[9.5px] leading-none text-[#333]">
      <div className="h-px shrink-0 bg-[#7488a8]" />
      <TitleBar />
      <div className="h-[18px] shrink-0 flex items-center pl-[10px] whitespace-nowrap">
        {menus.map((m) => (
          <span key={m.label} className={m.w}>{m.label}</span>
        ))}
      </div>
      <OptionsBar />
      <div className="h-px shrink-0 bg-[#8b8b8b]" />
      <div className="h-[694px] shrink-0 flex border-l border-[#7ba0b0] pl-[2px]">
        <div className="w-px bg-[#777]" />
        <Toolbox />
        <DocumentArea />
        <div className="w-[222px] flex flex-col border-r border-[#666]">
          <div className="h-[10px] shrink-0 bg-gradient-to-b from-[#5a5a5a] to-[#383838] flex items-center justify-between pl-[20px] pr-[2px]">
            <Arrows left />
            <Arrows />
          </div>
          <div className="flex-1 flex">
            <IconStrip />
            <div className="flex-1 flex flex-col">
              <ColorPanel />
              <PanelDivider />
              <MasksPanel />
              <PanelDivider />
              <LayersPanel />
            </div>
          </div>
        </div>
        <div className="flex-1 border-r-2 border-[#8398b8]" />
      </div>
      <div className="h-[2px] shrink-0 bg-[#d0d4d8] border-t border-[#777]" />
      <div className="flex-1 bg-gradient-to-r from-[#7db0bd] via-[#3d7498] to-[#2c5280]" />
      <LayerStyleDialog />
      <GradientEditor />
      <Annotation />
      <Watermark />
    </div>
  )
}
